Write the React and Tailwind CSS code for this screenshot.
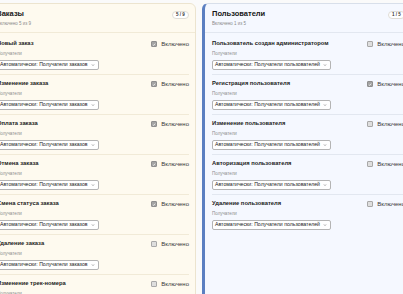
import React from "react";

const orders = [
  ["Новый заказ", true],
  ["Изменение заказа", true],
  ["Оплата заказа", true],
  ["Отмена заказа", true],
  ["Смена статуса заказа", true],
  ["Удаление заказа", false],
  ["Изменение трек-номера", false],
  ["Возврат заказа", false],
  ["Комментарий к заказу", false],
];

const users = [
  ["Пользователь создан администратором", false],
  ["Регистрация пользователя", true],
  ["Изменение пользователя", false],
  ["Авторизация пользователя", false],
  ["Удаление пользователя", false],
];

function Check({ on }) {
  return on ? (
    <span className="flex h-[6px] w-[6px] items-center justify-center rounded-[1px] border border-[#8f8f8f] bg-[#a3a3a3]">
      <svg viewBox="0 0 10 10" className="h-[5px] w-[5px]">
        <path d="M2 5.2 L4.2 7.3 L8 2.8" fill="none" stroke="#fff" strokeWidth="1.8" />
      </svg>
    </span>
  ) : (
    <span className="block h-[6px] w-[6px] rounded-[1px] border border-[#a8a8a8] bg-[#dedede]" />
  );
}

function Item({ title, on, sel, last, divider }) {
  return (
    <div className={`flex flex-col pt-[5px] pb-[4px] ${last ? "" : "border-b " + divider}`}>
      <div className="flex h-[8px] items-center justify-between">
        <span className="text-[5.8px] font-bold leading-none text-[#1c1c1c] whitespace-nowrap">{title}</span>
        <span className="flex items-center gap-[4px]">
          <Check on={on} />
          <span className="text-[6px] leading-none text-[#3a3a3a] whitespace-nowrap">Включено</span>
        </span>
      </div>
      <div className="mt-[3px] h-[6px] text-[4.5px] leading-[6px] text-[#8d8d8d]">Получатели</div>
      <div className="mt-[3px] flex h-[10px] w-fit items-center gap-[3px] rounded-[2px] border border-[#b4b4b4] bg-white pl-[2px] pr-[3px]">
        <span className="text-[5.2px] leading-none text-[#222] whitespace-nowrap">{sel}</span>
        <svg viewBox="0 0 10 10" className="h-[4px] w-[4px]">
          <path d="M2.5 3.8 L5 6.3 L7.5 3.8" fill="none" stroke="#444" strokeWidth="1.3" />
        </svg>
      </div>
    </div>
  );
}

function Card({ title, sub, badge, items, sel, variant }) {
  const blue = variant === "blue";
  const divider = blue ? "border-[#e2e7f0]" : "border-[#f1ead7]";
  const pl = blue ? "pl-[7px]" : "pl-[10px]";
  return (
    <div
      className={
        blue
          ? "w-[210px] shrink-0 rounded-[6px] border border-[#d8dfea] border-l-[3px] border-l-[#5b7fc1] bg-[#f5f8ff]"
          : "w-[210px] shrink-0 rounded-[6px] border border-[#ece4cf] bg-[#fefaef]"
      }
    >
      <div className={`flex items-start justify-between border-b ${divider} ${pl} pr-[6px] pt-[5px] pb-[5px]`}>
        <div className="flex flex-col">
          <div className="flex h-[10px] items-center text-[7.5px] font-bold leading-none text-[#161616]">{title}</div>
          <div className="mt-[2px] h-[6px] text-[4.5px] leading-[6px] text-[#8a8a8a]">{sub}</div>
        </div>
        <span className="mt-[2px] flex h-[8px] w-[17px] items-center justify-center rounded-full border border-[#e0ddd6] bg-white text-[4.5px] font-bold leading-none text-[#333]">
          {badge}
        </span>
      </div>
      <div className={`flex flex-col ${pl} pr-[6px] pt-[2px]`}>
        {items.map(([t, on], i) => (
          <Item key={t} title={t} on={on} sel={sel} last={i === items.length - 1} divider={divider} />
        ))}
      </div>
    </div>
  );
}

export default function App() {
  return (
    <div className="h-[294px] w-[403px] overflow-hidden bg-[#fafafa] font-['Liberation_Sans',Arial,sans-serif]">
      <div className="ml-[-14px] mt-[3px] flex items-stretch gap-[6px] pb-[20px]">
        <Card
          title="Заказы"
          sub="Включено 5 из 9"
          badge="5 / 9"
          items={orders}
          sel="Автоматически: Получатели заказов"
          variant="cream"
        />
        <Card
          title="Пользователи"
          sub="Включено 1 из 5"
          badge="1 / 5"
          items={users}
          sel="Автоматически: Получатели пользователей"
          variant="blue"
        />
      </div>
    </div>
  );
}
